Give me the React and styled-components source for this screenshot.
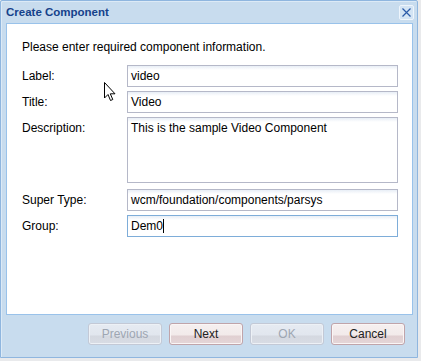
import React from 'react'
import styled, { createGlobalStyle } from 'styled-components'

const GlobalStyle = createGlobalStyle`
  html, body {
    margin: 0;
    padding: 0;
    background: #e9eaec;
    font-family: "Liberation Sans", Arial, sans-serif;
  }
`

const Page = styled.div`
  position: relative;
  width: 421px;
  height: 361px;
  overflow: hidden;
`

const Window = styled.div`
  box-sizing: border-box;
  width: 418px;
  height: 358px;
  background: #c8dcee;
  border: 1px solid #8fb6df;
  box-shadow: inset 1px 1px 0 #dceaf6;
  border-radius: 2px 2px 0 0;
  display: flex;
  flex-direction: column;
`

const TitleBar = styled.div`
  height: 22px;
  display: flex;
  align-items: center;
  justify-content: space-between;
  padding: 0 3px 0 5px;
`

const Title = styled.span`
  font-weight: bold;
  font-size: 11.5px;
  color: #15428b;
`

const CloseButton = styled.div`
  box-sizing: border-box;
  width: 15px;
  height: 15px;
  margin-top: 1px;
  border: 1px solid #eef5fc;
  border-radius: 2px;
  background: #d3e4f4;
  display: flex;
  align-items: center;
  justify-content: center;
`

const Panel = styled.div`
  box-sizing: border-box;
  margin: 0 4px 0 5px;
  height: 292px;
  background: #ffffff;
  border: 1px solid #99c2ea;
  padding: 16px 14px 0 15px;
`

const Intro = styled.div`
  font-size: 12px;
  color: #000;
  line-height: 14px;
  margin-bottom: 11px;
`

const Form = styled.div`
  display: flex;
  flex-direction: column;
  gap: 4px;
`

const Row = styled.div`
  display: flex;
  align-items: flex-start;
  margin-bottom: ${p => p.$spaced ? '2px' : '0'};
`

const Label = styled.div`
  width: 105px;
  font-size: 12px;
  color: #000;
  padding-top: 4px;
  line-height: 14px;
`

const Field = styled.div`
  box-sizing: border-box;
  width: 271px;
  height: ${p => p.$tall ? '66px' : '22px'};
  border: 1px solid ${p => p.$focus ? '#7eadd9' : '#b5b8c8'};
  background: linear-gradient(#e8eef6 0, #ffffff 4px);
  padding: 3px 3px 0 3px;
  font-size: 12px;
  line-height: 14px;
  color: #000;
  display: flex;
  align-items: flex-start;
`

const Caret = styled.span`
  display: inline-block;
  width: 1px;
  height: 14px;
  background: #000;
`

const Footer = styled.div`
  display: flex;
  justify-content: flex-end;
  gap: 7px;
  padding: 8px 12px 0 0;
`

const Button = styled.div`
  box-sizing: border-box;
  width: 74px;
  height: 22px;
  border-radius: 3px;
  border: 1px solid ${p => p.$disabled ? '#c3c9d6' : '#c0a4aa'};
  background: ${p => p.$disabled
    ? 'linear-gradient(#e6ebf2 0, #e1e6ee 11px, #d4d8e0 12px, #d8dce4 100%)'
    : 'linear-gradient(#f6f0f0 0, #f2eaea 11px, #e0cfd1 12px, #e5d6d8 100%)'};
  box-shadow: inset 0 0 0 1px ${p => p.$disabled ? '#edf1f6' : '#faf6f6'};
  font-size: 12px;
  color: ${p => p.$disabled ? '#9ea6b2' : '#222'};
  display: flex;
  align-items: center;
  justify-content: center;
`

const Cursor = styled.svg`
  position: absolute;
  left: 104px;
  top: 82px;
`

const App = () => {
  return (
    <Page>
      <GlobalStyle />
      <Window>
        <TitleBar>
          <Title>Create Component</Title>
          <CloseButton>
            <svg width="11" height="11" viewBox="0 0 11 11">
              <path d="M1.5 1.5 L9.5 9.5 M9.5 1.5 L1.5 9.5" stroke="#2a5aa8" strokeWidth="1.2" />
            </svg>
          </CloseButton>
        </TitleBar>
        <Panel>
          <Intro>Please enter required component information.</Intro>
          <Form>
            <Row>
              <Label>Label:</Label>
              <Field>video</Field>
            </Row>
            <Row>
              <Label>Title:</Label>
              <Field>Video</Field>
            </Row>
            <Row $spaced>
              <Label>Description:</Label>
              <Field $tall>This is the sample Video Component</Field>
            </Row>
            <Row>
              <Label>Super Type:</Label>
              <Field>wcm/foundation/components/parsys</Field>
            </Row>
            <Row>
              <Label>Group:</Label>
              <Field $focus>Dem0<Caret /></Field>
            </Row>
          </Form>
        </Panel>
        <Footer>
          <Button $disabled>Previous</Button>
          <Button>Next</Button>
          <Button $disabled>OK</Button>
          <Button>Cancel</Button>
        </Footer>
      </Window>
      <Cursor width="13" height="20" viewBox="0 0 13 20">
        <path d="M0.5 0.5 L0.5 16 L4 12.5 L6.5 18.5 L8.8 17.5 L6.3 11.8 L11 11.8 Z" fill="#fff" stroke="#000" strokeWidth="1" strokeLinejoin="miter" />
      </Cursor>
    </Page>
  )
}

export default App
